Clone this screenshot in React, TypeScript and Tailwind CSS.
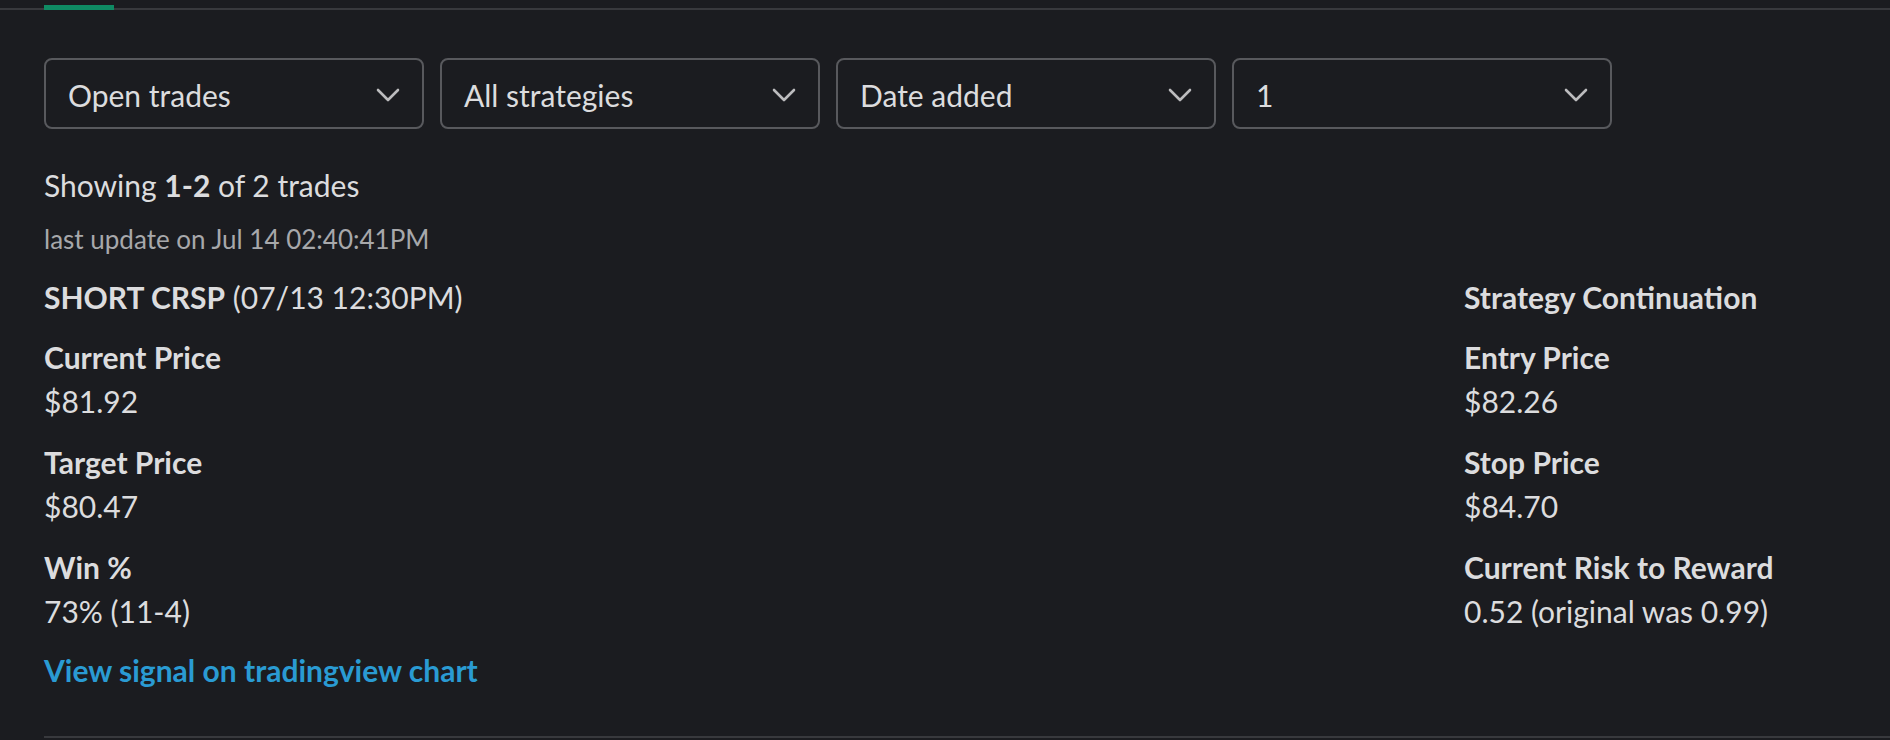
const filters = ['Open trades', 'All strategies', 'Date added', '1'];

const leftFields = [
    { label: 'Current Price', value: '$81.92' },
    { label: 'Target Price', value: '$80.47' },
    { label: 'Win %', value: '73% (11-4)' },
];

const rightFields = [
    { label: 'Entry Price', value: '$82.26' },
    { label: 'Stop Price', value: '$84.70' },
    { label: 'Current Risk to Reward', value: '0.52 (original was 0.99)' },
];

function Field({ label, value }: { label: string; value: string }) {
    return (
        <div>
            <div className="font-bold leading-[44px]">{label}</div>
            <div className="leading-[44px]">{value}</div>
        </div>
    );
}

function Chevron() {
    return (
        <svg width="24" height="14" viewBox="0 0 24 14" fill="none" className="text-[#bcbcbe]">
            <polyline points="2,2 12,12 22,2" stroke="currentColor" strokeWidth="2.6" strokeLinecap="round" strokeLinejoin="round" />
        </svg>
    );
}

export default function App() {
    return (
        <div
            className="min-h-[740px] w-full bg-[#1b1c20] text-[#dcdcde] overflow-hidden"
            style={{ fontFamily: 'Lato, "Open Sans", sans-serif' }}
        >
            {/* tab bar underline */}
            <div className="relative h-[10px] border-b-2 border-[#38393d]">
                <div className="absolute left-[44px] top-[5px] h-[5px] w-[70px] bg-[#0f8a63]" />
            </div>

            <div className="pl-[44px]">
                <div className="mt-[48px] flex gap-4">
                    {filters.map((f) => (
                        <button
                            key={f}
                            className="flex h-[71px] w-[380px] items-center justify-between rounded-lg border-2 border-[#58595d] pt-[3px] pl-[22px] pr-[22px] text-[30px] text-[#dcdcde]"
                        >
                            <span>{f}</span>
                            <Chevron />
                        </button>
                    ))}
                </div>

                <div className="mt-[34px] text-[30px] leading-[44px]">
                    Showing <span className="font-bold">1-2</span> of 2 trades
                </div>
                <div className="mt-[10px] text-[26px] leading-[44px] text-[#a7a8ab]">
                    last update on Jul 14 02:40:41PM
                </div>

                <div className="mt-[14px] flex text-[30px]">
                    <div className="flex-1">
                        <div className="leading-[44px]">
                            <span className="font-bold">SHORT CRSP</span> (07/13 12:30PM)
                        </div>
                        <div className="mt-[16px] flex flex-col gap-[17px]">
                            {leftFields.map((f) => (
                                <Field key={f.label} {...f} />
                            ))}
                        </div>
                        <a href="#" className="mt-[15px] block font-bold leading-[44px] text-[#2a9bd3]">
                            View signal on tradingview chart
                        </a>
                    </div>
                    <div className="w-[426px]">
                        <div className="font-bold leading-[44px]">Strategy Continuation</div>
                        <div className="mt-[16px] flex flex-col gap-[17px]">
                            {rightFields.map((f) => (
                                <Field key={f.label} {...f} />
                            ))}
                        </div>
                    </div>
                </div>

                <div className="mt-[44px] h-[2px] bg-[#38393d]" />
            </div>
        </div>
    );
}
